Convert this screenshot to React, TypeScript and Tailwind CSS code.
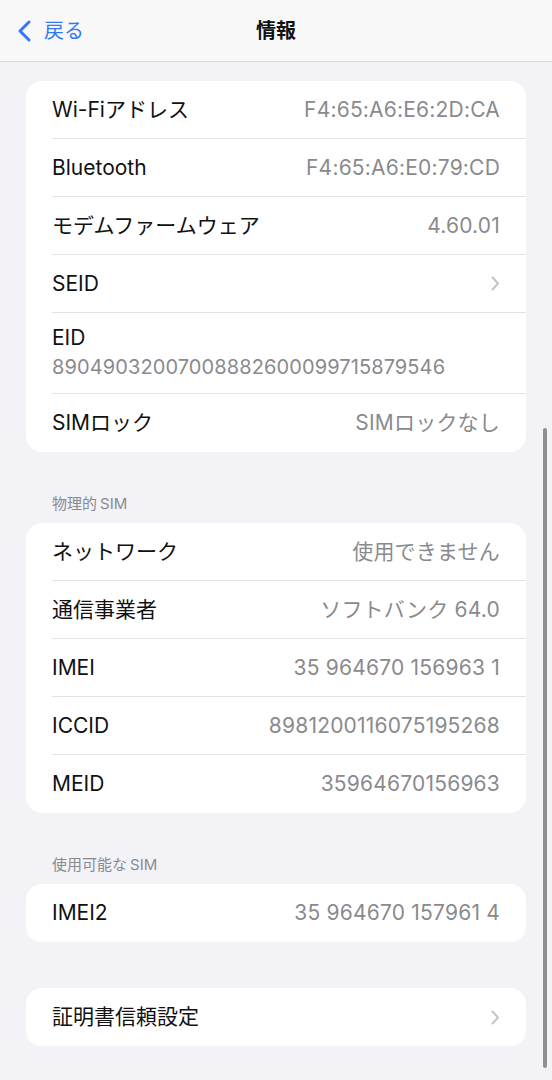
import React from "react";

type Row = {
  label: string;
  value?: string;
  chevron?: boolean;
  stacked?: boolean;
};

const font = { fontFamily: 'Inter, "Noto Sans CJK JP", sans-serif' };

function Chevron() {
  return (
    <svg width="9" height="15" viewBox="0 0 9 15" fill="none" className="shrink-0">
      <path d="M1.5 1.5L7 7.5L1.5 13.5" stroke="#c4c4c7" strokeWidth="2" strokeLinecap="round" strokeLinejoin="round" />
    </svg>
  );
}

function Card({ rows }: { rows: Row[] }) {
  return (
    <div className="bg-white rounded-2xl overflow-hidden">
      {rows.map((row, i) => {
        const last = i === rows.length - 1;
        return (
          <div key={row.label} className="pl-[26px]">
            {row.stacked ? (
              <div className={`flex flex-col pr-[26px] pt-[12px] pb-[13px] ${last ? "" : "border-b border-[#e2e2e6]"}`}>
                <span className="text-[21px] leading-[26px] text-[#111]">{row.label}</span>
                <span className="mt-[3px] text-[20px] leading-[26px] text-[#8a8a8e] tracking-[0.1px]">{row.value}</span>
              </div>
            ) : (
              <div className={`h-[58px] flex items-center justify-between pr-[26px] ${last ? "" : "border-b border-[#e2e2e6]"}`}>
                <span className="text-[21px] text-[#111]">{row.label}</span>
                {row.chevron ? (
                  <Chevron />
                ) : (
                  <span className="text-[21px] text-[#8a8a8e] tracking-[0.2px]">{row.value}</span>
                )}
              </div>
            )}
          </div>
        );
      })}
    </div>
  );
}

function SectionHeader({ title, latin }: { title: string; latin: string }) {
  return (
    <div className="pl-[26px] pt-[43px] pb-[10px] text-[15px] leading-[18px] text-[#8a8a8e]">
      {title}
      <span className="ml-[3px]">{latin}</span>
    </div>
  );
}

export default function App() {
  const general: Row[] = [
    { label: "Wi-Fiアドレス", value: "F4:65:A6:E6:2D:CA" },
    { label: "Bluetooth", value: "F4:65:A6:E0:79:CD" },
    { label: "モデムファームウェア", value: "4.60.01" },
    { label: "SEID", chevron: true },
    { label: "EID", value: "89049032007008882600099715879546", stacked: true },
    { label: "SIMロック", value: "SIMロックなし" },
  ];

  const physical: Row[] = [
    { label: "ネットワーク", value: "使用できません" },
    { label: "通信事業者", value: "ソフトバンク 64.0" },
    { label: "IMEI", value: "35 964670 156963 1" },
    { label: "ICCID", value: "8981200116075195268" },
    { label: "MEID", value: "35964670156963" },
  ];

  return (
    <div className="relative h-[1080px] overflow-hidden bg-[#f2f2f7]" style={font}>
      <header className="h-[62px] grid grid-cols-[1fr_auto_1fr] items-center bg-[#f8f8f9] border-b border-[#d9d9dc]">
        <div className="flex items-center pl-[17px] gap-[13px] text-[#3478f6]">
          <svg width="14" height="22" viewBox="0 0 14 22" fill="none">
            <path d="M12 2L3 11L12 20" stroke="#3478f6" strokeWidth="3" strokeLinecap="round" strokeLinejoin="round" />
          </svg>
          <span className="text-[20px]">戻る</span>
        </div>
        <h1 className="text-[20px] font-bold text-[#111]">情報</h1>
        <div />
      </header>

      <main className="px-[26px] pt-[19px]">
        <Card rows={general} />
        <SectionHeader title="物理的" latin="SIM" />
        <Card rows={physical} />
        <SectionHeader title="使用可能な" latin="SIM" />
        <Card rows={[{ label: "IMEI2", value: "35 964670 157961 4" }]} />
        <div className="h-[46px]" />
        <Card rows={[{ label: "証明書信頼設定", chevron: true }]} />
      </main>

      <div className="absolute right-[5px] top-[428px] w-[4px] h-[640px] rounded-full bg-[#8e8e93]" />
    </div>
  );
}
